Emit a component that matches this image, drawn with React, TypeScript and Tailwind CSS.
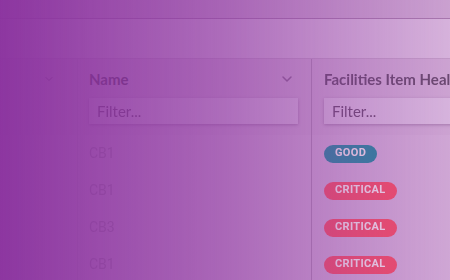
import { ChevronDown } from 'lucide-react';

const rows = [
  { name: 'CB1', health: 'GOOD' },
  { name: 'CB1', health: 'CRITICAL' },
  { name: 'CB3', health: 'CRITICAL' },
  { name: 'CB1', health: 'CRITICAL' },
];

const Badge = ({ value }: { value: string }) => (
  <span
    className={
      'inline-flex h-[18px] items-center rounded-full px-[11px] text-[11px] font-bold tracking-[0.03em] text-[#f6e4ee] ' +
      (value === 'GOOD' ? 'bg-[#2a88a0]' : 'bg-[#f4506a]')
    }
  >
    {value}
  </span>
);

export default function App() {
  return (
    <div className="relative h-[280px] w-[450px] overflow-hidden bg-[#d9b7de] font-['Roboto',sans-serif]">
      <div className="blur-[0.7px]">
        <div className="h-[19px] border-b border-[#a97aaf] bg-[#cda5d2]" />
        <div className="h-[39px]" />

        <div className="border-t border-[#c39cc8]">
          <div className="grid h-[76px] grid-cols-[78px_234px_1fr] bg-[#cfa7d4]">
            <div className="flex justify-end border-r border-[#c59ecb] pr-[22px] pt-[14px]">
              <ChevronDown className="h-[12px] w-[12px] text-[#6f4477]" strokeWidth={2} />
            </div>
            <div className="flex flex-col border-r border-[#b088b6] pl-[11px] pr-[13px] pt-[10px]">
              <div className="flex h-[20px] items-center justify-between">
                <span className="font-['Lato',sans-serif] text-[15px] font-bold text-[#5a3a60]">Name</span>
                <ChevronDown className="mr-[3px] h-[16px] w-[16px] text-[#8f6596]" strokeWidth={2.2} />
              </div>
              <div className="mt-[9px] flex h-[26px] items-center bg-[#d9b8df] px-[8px] font-['Lato',sans-serif] text-[15px] text-[#6e4a74] shadow-[0_1px_3px_rgba(90,40,100,0.35)]">
                Filter...
              </div>
            </div>
            <div className="flex flex-col pl-[12px] pt-[10px]">
              <div className="flex h-[20px] items-center">
                <span className="whitespace-nowrap font-['Lato',sans-serif] text-[15px] font-bold text-[#6a4a70]">
                  Facilities Item Heal
                </span>
              </div>
              <div className="mt-[9px] flex h-[26px] w-[200px] items-center bg-[#d9b8df] px-[8px] font-['Lato',sans-serif] text-[15px] text-[#6e4a74] shadow-[0_1px_3px_rgba(90,40,100,0.35)]">
                Filter...
              </div>
            </div>
          </div>

          {rows.map((r, i) => (
            <div key={i} className="grid h-[37px] grid-cols-[78px_234px_1fr] bg-[#d2abd7]">
              <div className="border-r border-[#c59ecb]" />
              <div className="flex items-center border-r border-[#b088b6] pl-[11px] text-[14px] text-[#a585aa]">
                {r.name}
              </div>
              <div className="flex items-center pl-[12px]">
                <Badge value={r.health} />
              </div>
            </div>
          ))}
        </div>
      </div>

      <div className="pointer-events-none absolute inset-0 bg-[linear-gradient(to_right,rgba(138,50,158,0.97)_0%,rgba(140,52,160,0.57)_50%,rgba(140,52,160,0.03)_100%)]" />
    </div>
  );
}
